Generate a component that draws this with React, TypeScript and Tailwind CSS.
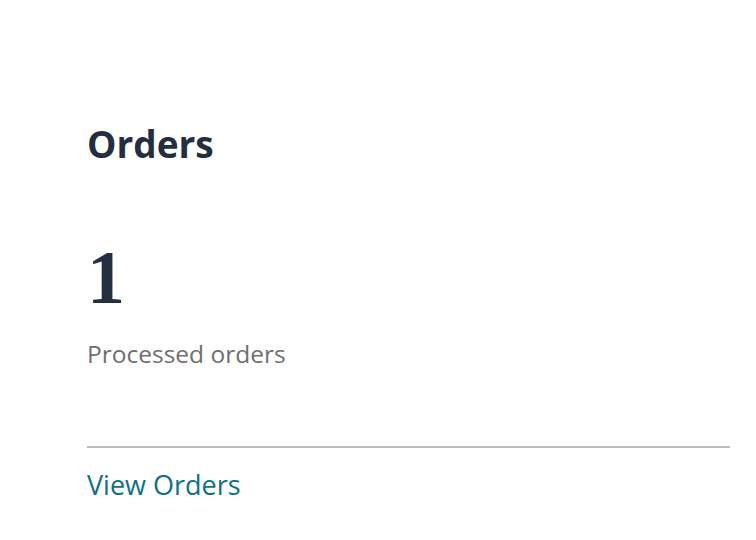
export default function App() {
  return (
    <div className="min-h-screen bg-white font-['Open_Sans',sans-serif]">
      <div className="pl-[87px] pr-[26px] pt-[122px]">
        <h2 className="text-[37px] leading-[44px] font-bold text-[#232f3e]">Orders</h2>

        <div className="mt-[73px] font-['Liberation_Serif',serif] text-[76px] leading-[76px] font-bold text-[#232f3e]">
          1
        </div>
        <p className="mt-[23px] text-[24.5px] leading-[32px] text-[#6f6f6f]">Processed orders</p>

        <div className="mt-[76px] border-t-2 border-[#bbbcbc]" />

        <a href="#" className="mt-[19px] block text-[27px] leading-[36px] text-[#0e7184]">
          View Orders
        </a>
      </div>
    </div>
  );
}
